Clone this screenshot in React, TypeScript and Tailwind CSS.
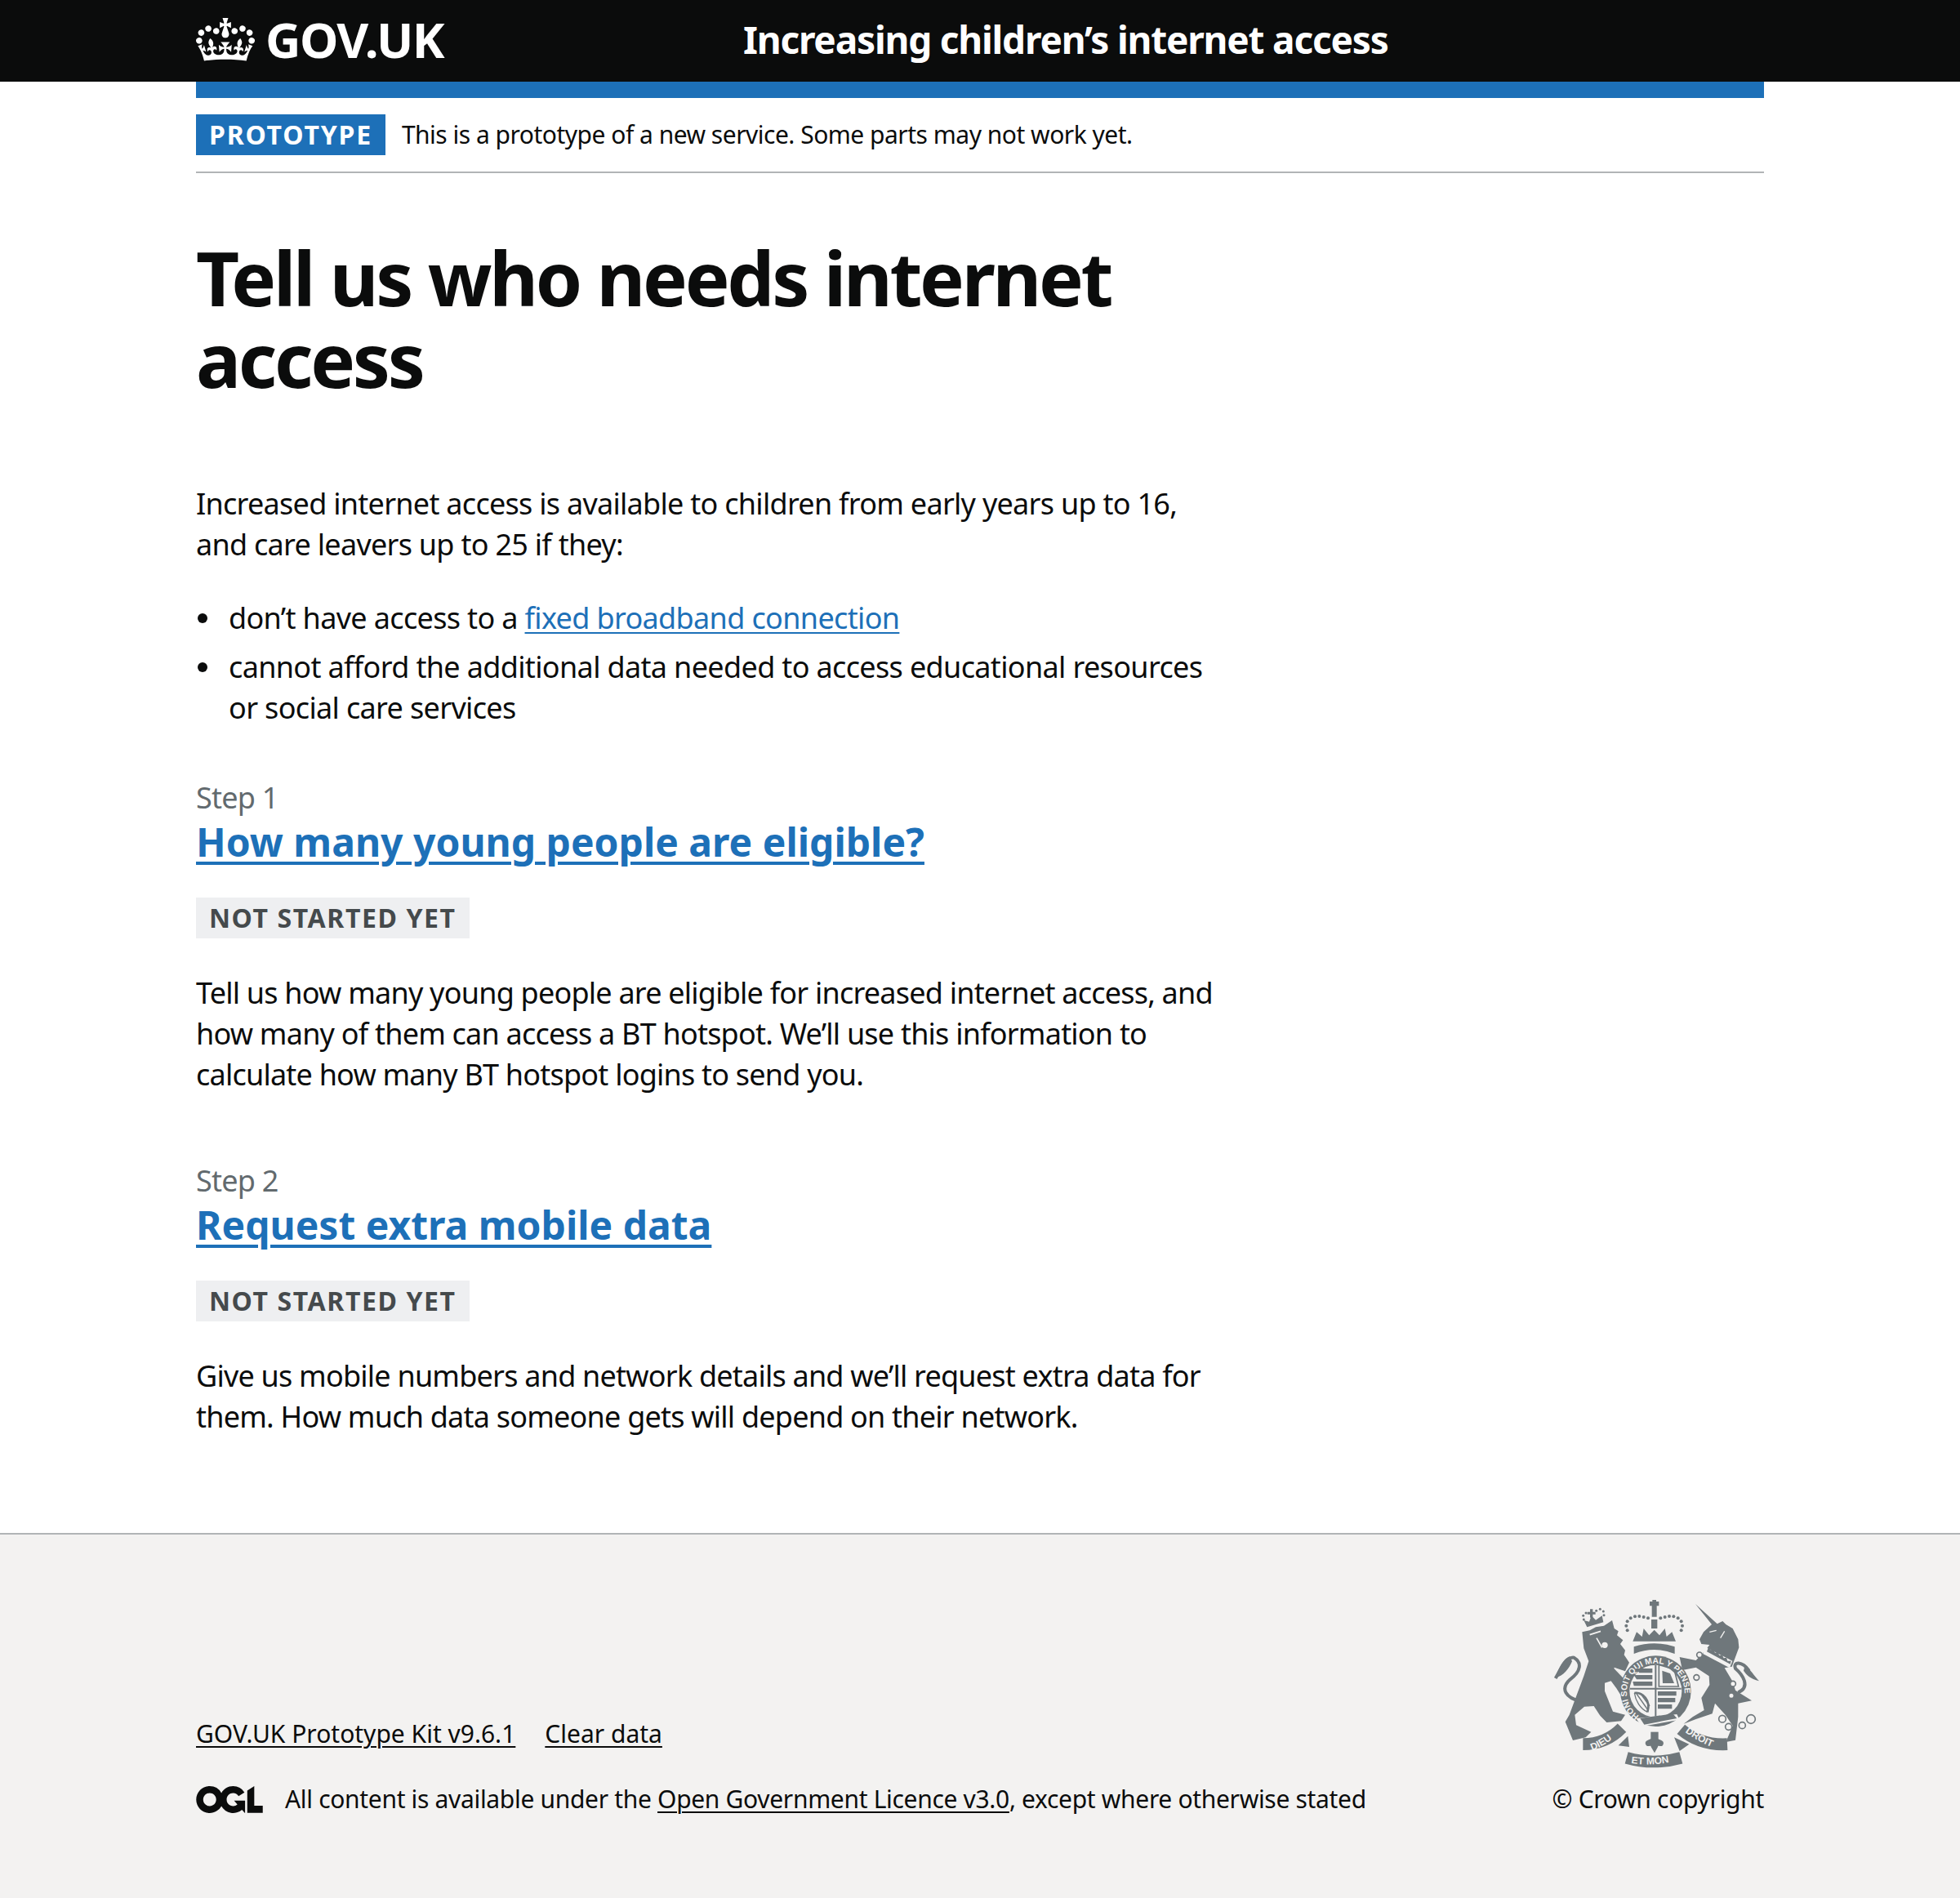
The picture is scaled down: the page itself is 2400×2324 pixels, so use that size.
import React from "react";

const font = "font-['Noto_Sans','Liberation_Sans',sans-serif]";

function Crown() {
  return (
    <svg viewBox="0 0 132 97" className="w-[72px] h-[53px] mr-[13px] fill-white">
      <path
        fillRule="evenodd"
        d="M25 30.2c3.5 1.5 7.7-.2 9.1-3.7 1.5-3.6-.2-7.8-3.9-9.2-3.6-1.4-7.6.3-9.1 3.9-1.4 3.5.3 7.5 3.9 9zM9 39.5c3.6 1.5 7.8-.2 9.2-3.7 1.5-3.6-.2-7.8-3.9-9.1-3.6-1.5-7.6.2-9.1 3.8-1.4 3.5.3 7.5 3.8 9zM4.4 57.2c3.5 1.5 7.7-.2 9.1-3.8 1.5-3.6-.2-7.7-3.9-9.1-3.5-1.5-7.6.3-9.1 3.8-1.4 3.5.3 7.6 3.9 9.1zm38.3-21.4c3.5 1.5 7.7-.2 9.1-3.8 1.5-3.6-.2-7.7-3.9-9.1-3.6-1.5-7.6.3-9.1 3.8-1.3 3.6.4 7.7 3.9 9.1zm64.4-5.6c-3.6 1.5-7.8-.2-9.1-3.7-1.5-3.6.2-7.8 3.8-9.2 3.6-1.4 7.7.3 9.2 3.9 1.3 3.5-.4 7.5-3.9 9zm15.9 9.3c-3.6 1.5-7.7-.2-9.1-3.7-1.5-3.6.2-7.8 3.7-9.1 3.6-1.5 7.7.2 9.2 3.8 1.5 3.5-.3 7.5-3.8 9zm4.7 17.7c-3.6 1.5-7.8-.2-9.2-3.8-1.5-3.6.2-7.7 3.9-9.1 3.6-1.5 7.7.3 9.2 3.8 1.3 3.5-.4 7.6-3.9 9.1zM89.3 35.8c-3.6 1.5-7.8-.2-9.2-3.8-1.4-3.6.2-7.7 3.9-9.1 3.6-1.5 7.7.3 9.2 3.8 1.4 3.6-.3 7.7-3.9 9.1zM69.7 17.7l8.9 4.7V9.3l-8.9 2.8c-.2-.3-.5-.6-.9-.9L72.4 0H59.6l3.5 11.2c-.3.3-.6.5-.9.9l-8.8-2.8v13.1l8.8-4.7c.3.3.6.7.9.9l-5 15.4v.1c-.2.8-.4 1.6-.4 2.4 0 4.1 3.1 7.5 7 8.1h.2c.3 0 .7.1 1 .1.4 0 .7 0 1-.1h.2c4-.6 7.1-4.1 7.1-8.1 0-.8-.1-1.7-.4-2.4V34l-5.1-15.4c.4-.2.7-.6 1-.9zM66 92.8c16.9 0 32.8 1.1 47.1 3.2 4-16.9 8.9-26.7 14-33.5l-9.6-3.4c1 4.9 1.1 7.2 0 10.2-1.5-1.4-3-4.3-4.2-8.7L108.6 76c2.8-2 5-3.2 7.5-3.3-4.4 9.4-10 11.9-13.6 11.2-4.3-.8-6.3-4.6-5.6-7.9 1-4.7 5.7-5.9 8-.5 4.3-8.7-3-11.4-7.6-8.8 7.1-7.2 7.9-13.5 2.1-21.1-8 6.1-8.1 12.3-4.5 20.8-4.7-5.4-12.1-2.5-9.5 6.2 3.4-5.2 7.9-2 7.2 3.1-.6 4.3-6.4 7.8-13.5 7.2-10.3-.9-10.9-8-11.2-13.8 2.5-.5 7.1 1.8 11 7.3L80.2 60c-4.1 4.4-8 5.3-12.3 5.4 1.4-4.4 8-11.6 8-11.6H55.5s6.4 7.2 7.9 11.6c-4.2-.1-8-1-12.3-5.4l1.4 16.4c3.9-5.5 8.5-7.7 10.9-7.3-.3 5.8-.9 12.8-11.1 13.8-7.2.6-12.9-2.9-13.5-7.2-.7-5 3.8-8.3 7.1-3.1 2.7-8.7-4.6-11.6-9.4-6.2 3.7-8.5 3.6-14.7-4.6-20.8-5.8 7.6-5 13.9 2.2 21.1-4.7-2.6-11.9.1-7.7 8.8 2.3-5.5 7.1-4.2 8.1.5.7 3.3-1.3 7.1-5.7 7.9-3.5.7-9-1.8-13.5-11.2 2.5.1 4.7 1.3 7.5 3.3l-4.7-15.4c-1.2 4.4-2.7 7.2-4.3 8.7-1.1-3-.9-5.3 0-10.2l-9.5 3.4c5 6.9 9.9 16.7 14 33.5 14.8-2.1 30.8-3.2 47.7-3.2z"
      />
    </svg>
  );
}

function Ogl() {
  return (
    <svg viewBox="0 0 483.2 195.7" className="w-[82px] h-[33px] shrink-0 mr-[27px] fill-[#0b0c0c]">
      <path d="M421.5 142.8V.1l-50.7 32.3v161.1h112.4v-50.7zm-122.3-9.6A47.12 47.12 0 0 1 221 97.8c0-26 21.1-47.1 47.1-47.1 16.7 0 31.4 8.7 39.7 21.8l42.7-27.2A97.63 97.63 0 0 0 268.1 0c-36.5 0-68.3 20.1-85.1 49.7A98 98 0 0 0 97.8 0C43.9 0 0 43.9 0 97.8s43.9 97.8 97.8 97.8c36.5 0 68.3-20.1 85.1-49.7a97.76 97.76 0 0 0 149.6 25.4l19.4 22.2h3v-87.8h-80l24.3 27.5zM97.8 145c-26 0-47.1-21.1-47.1-47.1s21.1-47.1 47.1-47.1 47.2 21 47.2 47S123.8 145 97.8 145" />
    </svg>
  );
}

// royal arms, traced by eye from the reference
function Crest() {
  const c = "#6f777b";
  const bg = "#f3f2f1";
  const crownDots = [
    [338, 172], [334, 155], [338, 139], [350, 127], [366, 121], [382, 120], [398, 123], [414, 127],
    [460, 127], [476, 123], [492, 120], [508, 121], [524, 127], [536, 139], [540, 155], [536, 172],
  ];
  const lionCrownDots = [
    [178, 132], [176, 118], [186, 108], [224, 100], [238, 94], [250, 102], [252, 116],
  ];
  return (
    <svg viewBox="0 0 900 750" className="w-[300px] h-[250px]">
      {/* lion */}
      <path fill={c} d="M172 178 L200 172 L222 160 L252 155 L282 135 L290 165 L305 175 L300 190 L322 208 L312 222 L330 245 L326 262 L345 290 L330 322 L290 308 L330 350 L322 372 L345 408 L320 420 L298 385 L278 358 L255 365 L255 395 L285 470 L330 482 L315 505 L262 510 L238 485 L215 450 L180 452 L145 482 L150 520 L205 545 L185 565 L138 576 L110 508 L125 482 L150 415 L178 340 L196 285 L178 238 Z" />
      <path fill="none" stroke={c} strokeWidth="12" d="M165 432 C115 420 88 388 128 352 C168 322 172 290 142 272 C112 268 92 318 74 348" />
      <path fill={c} d="M126 268 C100 278 88 310 72 346 C105 340 125 310 135 285 Z" />
      <path fill="none" stroke={bg} strokeWidth="5" d="M200 188 L240 175 M225 200 L245 235" />
      <circle cx="255" cy="226" r="11" fill={bg} />
      <path fill="none" stroke={bg} strokeWidth="4" d="M290 310 L330 352" />
      {/* lion crown */}
      <path fill={c} d="M190 160 L178 135 L198 140 L206 118 L222 134 L245 118 L250 142 Z" />
      <path fill={c} d="M201 94 H211 V104 H221 V113 H211 V125 H201 V113 H191 V104 H201 Z" />
      {lionCrownDots.map(([x, y]) => (
        <circle key={`${x}-${y}`} cx={x} cy={y} r="4.5" fill={c} />
      ))}
      {/* unicorn */}
      <path fill={c} d="M603 205 L618 178 L648 150 L588 75 L668 148 L688 138 L700 150 L725 165 L745 205 L748 235 L735 270 L722 305 L695 310 L725 360 L735 392 L795 430 L745 440 L745 490 L735 575 L700 582 L725 522 L698 482 L660 440 L650 478 L590 498 L545 515 L578 490 L620 465 L610 420 L640 372 L638 340 L590 308 L540 318 L530 270 L590 282 L625 245 L640 225 L610 222 Z" />
      <path fill="none" stroke={c} strokeWidth="12" d="M745 400 C792 380 762 335 735 312 C725 285 760 285 785 320" />
      <path fill={c} d="M770 300 C790 315 805 340 822 358 C790 350 775 335 765 320 Z" />
      <path fill={bg} d="M622 232 L724 284 L714 310 L616 258 Z" />
      <path fill={c} d="M630 250 L716 296 L719 284 L706 284 L702 272 L692 274 L686 262 L676 264 L670 252 L660 254 L654 242 L644 244 L636 234 Z" />
      <path fill="none" stroke={bg} strokeWidth="4" d="M640 178 L665 172 M680 200 L695 175" />
      {[[603, 262], [592, 345], [726, 368], [720, 412]].map(([x, y]) => (
        <circle key={x} cx={x} cy={y} r="10" fill={bg} stroke={c} strokeWidth="5" />
      ))}
      {[[687, 497, 13], [710, 526, 12], [760, 521, 12], [792, 498, 16]].map(([x, y, r]) => (
        <circle key={x} cx={x} cy={y} r={r} fill={bg} stroke={c} strokeWidth="5" />
      ))}
      {/* crown */}
      <path fill={c} d="M358 212 L372 178 L392 195 L398 165 L418 190 L437 170 L456 190 L476 165 L482 195 L502 178 L516 212 Z" />
      <path fill="none" stroke={bg} strokeWidth="5" d="M366 228 Q437 205 508 228" />
      <path fill={c} d="M362 232 Q437 208 512 232 V258 Q437 228 362 258 Z" />
      <path fill={c} d="M426 132 H448 V165 H426 Z M428 82 H446 V122 H428 Z M420 66 H454 V82 H420 Z M430 60 H444 V88 H430 Z" />
      {crownDots.map(([x, y]) => (
        <circle key={`${x}-${y}`} cx={x} cy={y} r="6" fill={c} />
      ))}
      {/* shield and garter */}
      <circle cx="442" cy="395" r="130" fill={c} />
      <defs>
        <path id="garter" d="M386 489 A106 106 0 1 1 498 489" />
        <path id="dieu" d="M208 613 Q272 590 318 535" />
        <path id="etmon" d="M352 660 Q435 672 523 650" />
        <path id="droit" d="M550 545 Q610 590 680 612" />
      </defs>
      <text fill={bg} fontFamily="'Liberation Sans',sans-serif" fontSize="31" fontWeight="700">
        <textPath href="#garter" startOffset="1%">HONI SOIT QUI MAL Y PENSE</textPath>
      </text>
      <circle cx="442" cy="395" r="96" fill={bg} />
      <path fill="none" stroke={c} strokeWidth="6" d="M442 300 V490 M348 386 H536" />
      {/* quarters: lions, rampant lion, harp */}
      <path fill={c} d="M368 312 H430 V328 H382 Z M362 336 H430 V352 H372 Z M358 360 H430 V376 H362 Z" />
      <path fill="none" stroke={c} strokeWidth="5" d="M454 298 L510 315 L526 378 H454 Z" />
      <path fill={c} d="M466 320 L495 330 L510 366 H468 Z" />
      <path fill="none" stroke={c} strokeWidth="8" d="M364 402 C395 398 425 430 412 472" />
      <path fill="none" stroke={c} strokeWidth="4" d="M372 405 L412 462 M385 402 L420 450 M364 402 C368 430 385 460 412 472" />
      <path fill={c} d="M450 396 H518 V412 H450 Z M450 420 H514 V436 H450 Z M450 444 H502 V460 H450 Z" />
      <path fill={bg} d="M370 495 L520 480 L530 500 L390 525 Z" />
      <path fill={c} d="M385 495 L505 478 L520 495 L400 518 Z" />
      {/* motto */}
      <path fill="none" stroke={c} strokeWidth="44" d="M175 590 Q260 590 318 530" />
      <path fill="none" stroke={c} strokeWidth="44" d="M335 640 Q435 668 535 640" />
      <path fill="none" stroke={c} strokeWidth="44" d="M535 535 Q605 595 705 590" />
      <path fill={c} d="M305 595 L340 560 L345 600 Z M565 590 L510 565 L530 615 Z" />
      <path fill={c} d="M424 545 H452 V575 H424 Z" />
      <path fill={c} d="M436 565 C420 575 400 575 405 590 C412 605 425 590 425 600 L438 622 L450 600 C450 590 465 605 470 590 C475 575 455 575 436 565 Z" />
      <g fill={bg} fontFamily="'Liberation Sans',sans-serif" fontSize="36" fontWeight="700">
        <text><textPath href="#dieu">DIEU</textPath></text>
        <text><textPath href="#etmon">ET MON</textPath></text>
        <text><textPath href="#droit">DROIT</textPath></text>
      </g>
    </svg>
  );
}

function Tag({ children, blue }: { children: React.ReactNode; blue?: boolean }) {
  return (
    <strong
      className={`inline-block h-[50px] px-4 pt-[7px] text-[32px] leading-[36px] font-bold ${
        blue ? "bg-[#1d70b8] text-white tracking-[1.8px]" : "bg-[#eeeff1] text-[#454a4c] tracking-[1.6px]"
      }`}
    >
      {children}
    </strong>
  );
}

function Step({
  step,
  title,
  last,
  children,
}: {
  step: string;
  title: string;
  last?: boolean;
  children: React.ReactNode;
}) {
  return (
    <section className={last ? "mb-[117px]" : "mb-[80px]"}>
      <div className="text-[36px] leading-[50px] tracking-[-0.75px] text-[#626a6e]">{step}</div>
      <h2 className="text-[48px] leading-[60px] font-bold mb-[38px] -mt-[1px]">
        <a href="#" className="text-[#1d70b8] underline underline-offset-[6px] decoration-[4px]">
          {title}
        </a>
      </h2>
      <Tag>NOT STARTED YET</Tag>
      <p className="mt-[42px] text-[36px] leading-[50px] tracking-[-0.78px]">{children}</p>
    </section>
  );
}

export default function App() {
  return (
    <div className={`${font} min-h-[2324px] flex flex-col bg-white text-[#0b0c0c]`}>
      {/* Header */}
      <header className="h-[100px] bg-[#0b0c0c] text-white shrink-0">
        <div className="w-[1920px] mx-auto h-full flex items-center pb-[4px]">
          <div className="w-[670px] flex items-center">
            <Crown />
            <span className="text-[60px] leading-none font-bold tracking-[-1.5px]">GOV.UK</span>
          </div>
          <span className="text-[46px] leading-none font-bold tracking-[-1.2px]">
            Increasing children’s internet access
          </span>
        </div>
      </header>

      <div className="w-[1920px] mx-auto">
        <div className="h-5 bg-[#1d70b8]" />
        {/* Phase banner */}
        <div className="flex items-center h-[92px] border-b-2 border-[#b1b4b6]">
          <Tag blue>PROTOTYPE</Tag>
          <span className="ml-5 text-[30px] leading-[40px] tracking-[-0.5px]">
            This is a prototype of a new service. Some parts may not work yet.
          </span>
        </div>

        {/* Main */}
        <main className="w-[1255px] pt-[78px]">
          <h1 className="text-[92px] leading-[100px] font-bold tracking-[-3.3px] mb-[102px]">
            Tell us who needs internet access
          </h1>
          <div className="text-[36px] leading-[50px] tracking-[-0.72px]">
            <p className="mb-[40px]">
              Increased internet access is available to children from early years up to 16, and care
              leavers up to 25 if they:
            </p>
            <ul className="pl-10 mb-[60px] tracking-[-0.65px]">
              <li className="relative mb-[10px] before:content-[''] before:absolute before:-left-[38px] before:top-[19px] before:w-3 before:h-3 before:rounded-full before:bg-[#0b0c0c]">
                don’t have access to a{" "}
                <a href="#" className="text-[#1d70b8] underline underline-offset-4 decoration-2">
                  fixed broadband connection
                </a>
              </li>
              <li className="relative before:content-[''] before:absolute before:-left-[38px] before:top-[19px] before:w-3 before:h-3 before:rounded-full before:bg-[#0b0c0c]">
                cannot afford the additional data needed to access educational resources or social
                care services
              </li>
            </ul>
          </div>
          <Step step="Step 1" title="How many young people are eligible?">
            Tell us how many young people are eligible for increased internet access, and how many of
            them can access a BT hotspot. We’ll use this information to calculate how many BT hotspot
            logins to send you.
          </Step>
          <Step step="Step 2" title="Request extra mobile data" last>
            Give us mobile numbers and network details and we’ll request extra data for them. How
            much data someone gets will depend on their network.
          </Step>
        </main>
      </div>

      {/* Footer */}
      <footer className="flex-1 bg-[#f3f2f1] border-t-2 border-[#b1b4b6]">
        <div className="w-[1920px] mx-auto flex justify-between pt-[60px] text-[30px] leading-[40px]">
          <div className="pt-[164px]">
            <div className="flex gap-[36px] mb-[40px]">
              <a href="#" className="underline underline-offset-4 decoration-2">GOV.UK Prototype Kit v9.6.1</a>
              <a href="#" className="underline underline-offset-4 decoration-2">Clear data</a>
            </div>
            <div className="flex items-center tracking-[-0.32px]">
              <Ogl />
              <span>
                All content is available under the{" "}
                <a href="#" className="underline underline-offset-4 decoration-2">Open Government Licence v3.0</a>,
                except where otherwise stated
              </span>
            </div>
          </div>
          <div className="flex flex-col items-end">
            <div className="-mr-[20px]">
              <Crest />
            </div>
            <a href="#" className="-mt-[6px] tracking-[-0.3px]">© Crown copyright</a>
          </div>
        </div>
      </footer>
    </div>
  );
}
